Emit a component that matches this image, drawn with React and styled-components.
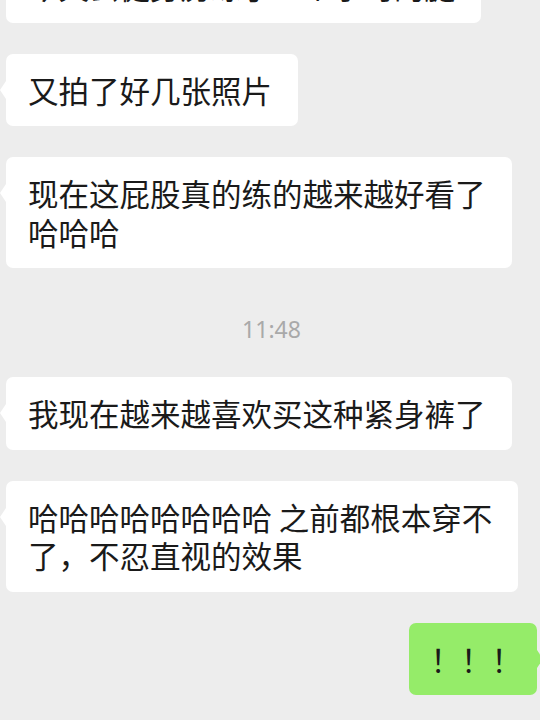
import React from 'react';
import styled, { createGlobalStyle } from 'styled-components';

const GlobalStyle = createGlobalStyle`
    html, body {
        margin: 0;
        padding: 0;
        background: #ededed;
    }
    body {
        font-family: "Noto Sans CJK SC", "Noto Sans", sans-serif;
        -webkit-font-smoothing: antialiased;
    }
`;

const Screen = styled.div`
    width: 540px;
    height: 720px;
    overflow: hidden;
    background: #ededed;
`;

// the list is scrolled: the first bubble sits mostly above the top edge
const MessageList = styled.div`
    display: flex;
    flex-direction: column;
    gap: 31px;
    margin-top: -49.8px;
    padding: 0 3px 0 6px;
`;

const Bubble = styled.div`
    position: relative;
    align-self: ${({ $mine }) => ($mine ? 'flex-end' : 'flex-start')};
    box-sizing: border-box;
    max-width: 525px;
    padding: ${({ $mine }) => ($mine ? '17px 15px 17px 22px' : '17px 26px 17px 22px')};
    border-radius: 7px;
    background: ${({ $mine }) => ($mine ? '#95ec69' : '#ffffff')};
    color: #1a1a1a;
    font-size: 30.5px;
    line-height: 38.5px;
    white-space: pre-line;

    &::before {
        content: '';
        position: absolute;
        top: 27px;
        ${({ $mine }) => ($mine ? 'right: -6px;' : 'left: -6px;')}
        border-top: 9px solid transparent;
        border-bottom: 9px solid transparent;
        ${({ $mine }) =>
            $mine
                ? 'border-left: 6px solid #95ec69;'
                : 'border-right: 6px solid #ffffff;'}
    }
`;

const TimeStamp = styled.div`
    padding: 15px 0 2px;
    text-align: center;
    font-family: "Noto Sans", sans-serif;
    font-size: 23px;
    line-height: 30px;
    color: #a9a9a9;
`;

const messages = [
    { id: 1, text: '今天去健身房练了一个小时的腿' },
    { id: 2, text: '又拍了好几张照片' },
    { id: 3, text: '现在这屁股真的练的越来越好看了\n哈哈哈' },
    { id: 4, time: '11:48' },
    { id: 5, text: '我现在越来越喜欢买这种紧身裤了' },
    { id: 6, text: '哈哈哈哈哈哈哈哈 之前都根本穿不\n了，不忍直视的效果' },
    { id: 7, text: '！！！', mine: true },
];

export default function App() {
    return (
        <Screen>
            <GlobalStyle />
            <MessageList>
                {messages.map(m =>
                    m.time ? (
                        <TimeStamp key={m.id}>{m.time}</TimeStamp>
                    ) : (
                        <Bubble key={m.id} $mine={m.mine}>
                            {m.text}
                        </Bubble>
                    )
                )}
            </MessageList>
        </Screen>
    );
}
